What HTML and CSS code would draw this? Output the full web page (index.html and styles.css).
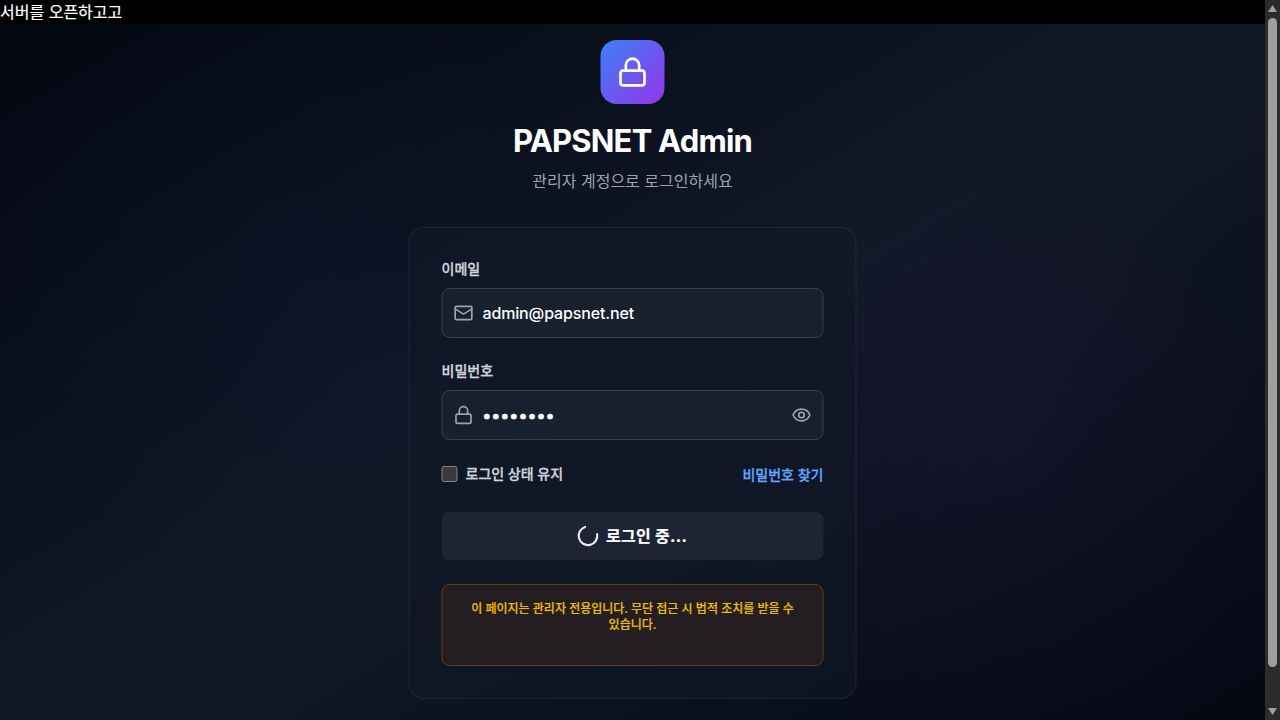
FILE: index.html
```
<!DOCTYPE html>
<html lang="ko">
<head>
<meta charset="utf-8">
<title>PAPSNET Admin</title>
<link rel="stylesheet" href="styles.css">
</head>
<body>
<div class="viewport">
  <div class="page">
    <div class="topbar">서버를 오픈하고고</div>
    <main class="stage">
      <header class="brand">
        <div class="logo">
          <svg class="icon" width="32" height="32" viewBox="0 0 24 24"><rect x="3" y="11" width="18" height="11" rx="2"/><path d="M7 11V7a5 5 0 0 1 10 0v4"/></svg>
        </div>
        <h1 class="title">PAPSNET Admin</h1>
        <p class="subtitle">관리자 계정으로 로그인하세요</p>
      </header>
      <form class="card">
        <div class="group">
          <label class="label" for="email">이메일</label>
          <div class="field">
            <svg class="icon" width="20" height="20" viewBox="0 0 24 24"><rect x="2" y="4" width="20" height="16" rx="1.5"/><path d="m22 7-8.97 5.7a1.94 1.94 0 0 1-2.06 0L2 7"/></svg>
            <input class="input" id="email" type="text" value="admin@papsnet.net">
          </div>
        </div>
        <div class="group">
          <label class="label" for="password">비밀번호</label>
          <div class="field">
            <svg class="icon" width="20" height="20" viewBox="0 0 24 24"><rect x="3" y="11" width="18" height="11" rx="2"/><path d="M7 11V7a5 5 0 0 1 10 0v4"/></svg>
            <input class="input input-password" id="password" type="password" value="password">
            <svg class="icon" width="20" height="20" viewBox="0 0 24 24"><path d="M2.062 12.348a1 1 0 0 1 0-.696 10.75 10.75 0 0 1 19.876 0 1 1 0 0 1 0 .696 10.75 10.75 0 0 1-19.876 0"/><circle cx="12" cy="12" r="3.3"/></svg>
          </div>
        </div>
        <div class="options">
          <label class="remember"><span class="checkbox"></span>로그인 상태 유지</label>
          <a class="forgot">비밀번호 찾기</a>
        </div>
        <button class="submit" type="button">
          <svg class="spinner" width="20" height="20" viewBox="0 0 20 20"><path d="M7.6 0.95A9.3 9.3 0 1 0 19.6 8"/></svg>
          로그인 중...
        </button>
        <div class="notice">이 페이지는 관리자 전용입니다. 무단 접근 시 법적 조치를 받을 수 있습니다.</div>
      </form>
    </main>
  </div>
  <div class="scrollbar">
    <svg width="9" height="7" viewBox="0 0 9 7"><path d="M4.5 0 9 7H0Z"/></svg>
    <div class="thumb"></div>
    <svg class="down" width="9" height="7" viewBox="0 0 9 7"><path d="M0 0H9L4.5 7Z"/></svg>
  </div>
</div>
</body>
</html>
```
FILE: styles.css
```
* { box-sizing: border-box; margin: 0; }
body { background: #000; color: #fff; font: 16px/24px Inter, "Noto Sans CJK KR", sans-serif; overflow: hidden; }
.viewport { display: flex; width: 1280px; height: 720px; overflow: hidden; }
.page { width: 1265px; height: 720px; overflow: hidden; }
.topbar { height: 24px; background: #000; -webkit-text-stroke: .2px; }
.stage {
  height: 740px;
  padding: 16px 1px 0 0;
  display: flex;
  flex-direction: column;
  align-items: center;
  background:
    radial-gradient(circle 310px at 310px 268px, rgba(0, 65, 120, .08), rgba(0, 65, 120, .04) 50%, transparent),
    radial-gradient(circle 310px at 1010px 420px, rgba(75, 35, 110, .1), rgba(75, 35, 110, .06) 50%, transparent),
    linear-gradient(to bottom right, #030712, #111827 50%, #030712);
}
.brand { display: flex; flex-direction: column; align-items: center; height: 187px; transform: translateX(.5px); }
.logo { width: 64px; height: 64px; border-radius: 16px; background: linear-gradient(135deg, #3b82f6, #9333ea); display: flex; align-items: center; justify-content: center; }
.icon { fill: none; stroke: currentColor; stroke-width: 2; stroke-linecap: round; stroke-linejoin: round; flex: none; }
.title { margin-top: 16px; font-size: 31px; line-height: 41px; font-weight: 700; letter-spacing: -.8px; }
.subtitle { margin-top: 8px; color: #9ca3af; }
.card { width: 448px; height: 472px; padding: 32px; border: 1px solid rgba(255, 255, 255, .07); border-radius: 16px; background: rgba(17, 24, 39, .6); display: flex; flex-direction: column; gap: 24px; transform: translateX(.5px); }
.group { display: flex; flex-direction: column; gap: 10px; }
.label { font-size: 14px; line-height: 18px; font-weight: 500; color: #d1d5db; -webkit-text-stroke: .3px; }
.field { height: 50px; padding: 0 11px; display: flex; align-items: center; gap: 9px; color: #9ca3af; border: 1px solid #374151; border-radius: 8px; background: rgba(31, 41, 55, .5); }
.input { flex: 1; min-width: 0; padding: 0; border: 0; outline: 0; background: none; color: #fff; font: 500 16px/24px Inter, "Noto Sans CJK KR", sans-serif; letter-spacing: -.15px; }
.input-password { letter-spacing: .5px; -webkit-text-stroke: .7px; }
.options { height: 24px; display: flex; justify-content: space-between; font-size: 14px; line-height: 20px; font-weight: 500; -webkit-text-stroke: .3px; }
.remember { display: flex; align-items: center; gap: 8px; height: 20px; color: #d1d5db; }
.checkbox { width: 16px; height: 16px; border: 1px solid #858585; border-radius: 2.5px; background: #3b3b3b; }
.forgot { margin-top: 1px; color: #60a5fa; }
.submit { height: 48px; border: 0; border-radius: 8px; background: #1e2433; color: #fff; display: flex; align-items: center; justify-content: center; gap: 8px; font: 700 16px/24px Inter, "Noto Sans CJK KR", sans-serif; letter-spacing: .3px; -webkit-text-stroke: .2px; }
.spinner { fill: none; stroke: #e6e8ec; stroke-width: 2.2; stroke-linecap: round; overflow: visible; }
.notice { height: 82px; padding: 16px; border: 1px solid #653f13; border-radius: 8px; background: #241e22; color: #eabb08; font-size: 12px; line-height: 16px; font-weight: 500; text-align: center; word-break: keep-all; -webkit-text-stroke: .2px; }
.scrollbar { width: 15px; height: 720px; padding: 5px 3px; display: flex; flex-direction: column; align-items: center; background: #2c2c2c; fill: #9f9f9f; }
.thumb { width: 9px; height: 649px; margin-top: 6px; border-radius: 5px; background: #9f9f9f; }
.down { margin-top: auto; }
```
